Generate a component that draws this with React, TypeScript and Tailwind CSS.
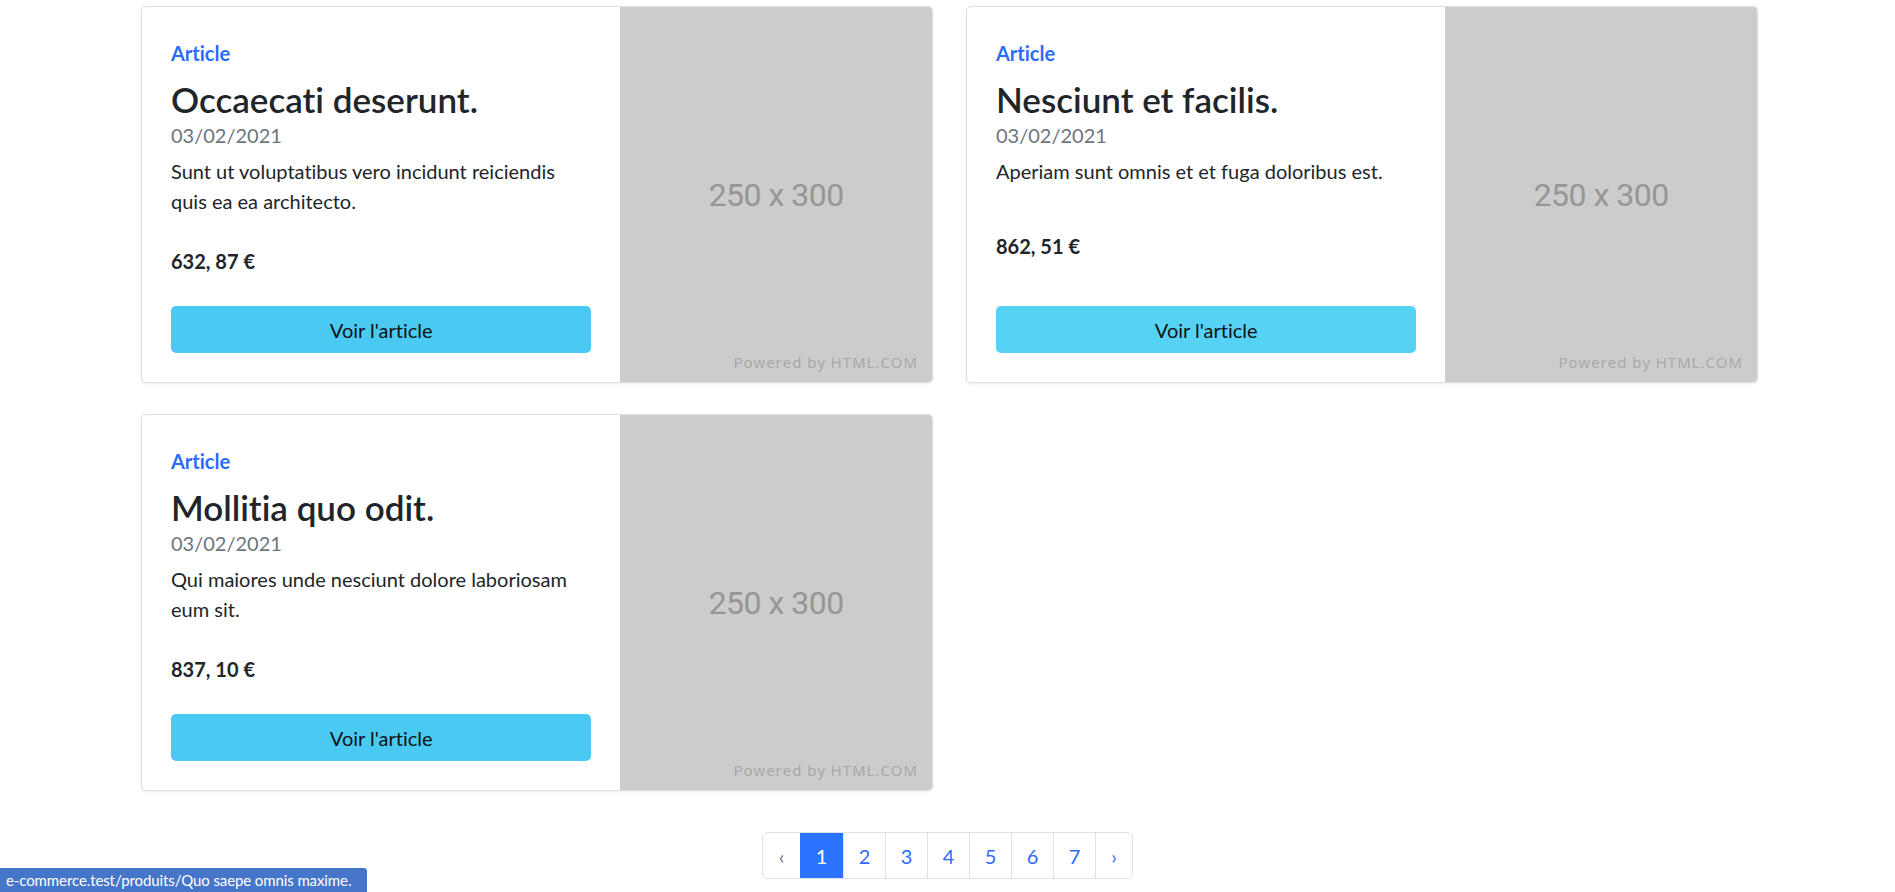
import React from "react";

type Item = { title: string; desc: string; price: string; btn: string };

const items: Item[] = [
  {
    title: "Occaecati deserunt.",
    desc: "Sunt ut voluptatibus vero incidunt reiciendis quis ea ea architecto.",
    price: "632, 87 €",
    btn: "bg-[#4ac9f2]",
  },
  {
    title: "Nesciunt et facilis.",
    desc: "Aperiam sunt omnis et et fuga doloribus est.",
    price: "862, 51 €",
    btn: "bg-[#56d2f5]",
  },
  {
    title: "Mollitia quo odit.",
    desc: "Qui maiores unde nesciunt dolore laboriosam eum sit.",
    price: "837, 10 €",
    btn: "bg-[#4ac9f2]",
  },
];

function Card({ item }: { item: Item }) {
  return (
    <div className="flex h-[377px] overflow-hidden rounded-[5px] border border-[#dfdfe6] bg-white shadow-[0_1px_3px_rgba(0,0,0,0.08)]">
      <div className="flex w-[479px] flex-col justify-between px-[29px] pt-[31px] pb-[29px]">
        <div>
          <div className="text-[20px] leading-[30px] font-bold text-[#2c6cfc]">Article</div>
          <div className="mt-[10px] text-[35px] leading-[42px] font-semibold text-[#212529]">{item.title}</div>
          <div className="text-[20px] leading-[30px] text-[#6c757d]">03/02/2021</div>
          <div className="mt-[6px] text-[20px] leading-[30px] text-[#212529]">{item.desc}</div>
        </div>
        <div className="text-[20px] leading-[30px] font-bold text-[#212529]">{item.price}</div>
        <div
          className={`flex h-[47px] items-center justify-center rounded-[5px] ${item.btn} text-[20px] text-[#111]`}
        >
          Voir l'article
        </div>
      </div>
      <div className="relative flex w-[312px] items-center justify-center bg-[#cccccc]">
        <span className="font-['Roboto',sans-serif] text-[32px] tracking-[-0.5px] text-[#969696]">250 x 300</span>
        <span className="absolute bottom-[9px] right-[14px] font-['Open_Sans',sans-serif] text-[15px] tracking-[1px] text-[#a6a6a6]">
          Powered by HTML.COM
        </span>
      </div>
    </div>
  );
}

export default function App() {
  const pages = ["1", "2", "3", "4", "5", "6", "7"];
  return (
    <div className="relative min-h-[892px] bg-white font-['Lato',sans-serif] [font-variant-ligatures:none]">
      <div className="ml-[141px] grid w-[1617px] grid-cols-2 gap-x-[33px] gap-y-[31px] pt-[6px]">
        {items.map((it, i) => (
          <Card key={i} item={it} />
        ))}
      </div>
      <div className="mt-[41px] flex justify-center">
        <div className="flex h-[47px] rounded-[6px] border border-[#dee2e6] text-[20px] text-[#2c6cfc]">
          <div className="flex w-[37px] items-center justify-center text-[#6c757d]">‹</div>
          {pages.map((p, i) => (
            <div
              key={p}
              className={
                i === 0
                  ? "flex w-[43px] items-center justify-center bg-[#2a73ff] text-white"
                  : "flex w-[42px] items-center justify-center border-l border-[#dee2e6]"
              }
            >
              {p}
            </div>
          ))}
          <div className="flex w-[37px] items-center justify-center border-l border-[#dee2e6]">›</div>
        </div>
      </div>
      <div className="fixed bottom-0 left-0 flex h-[24px] w-[367px] items-center overflow-hidden whitespace-nowrap rounded-tr-[3px] bg-[#4676c9] pl-[6px] text-[15px] tracking-[-0.1px] text-white">
        e-commerce.test/produits/Quo saepe omnis maxime.
      </div>
    </div>
  );
}
